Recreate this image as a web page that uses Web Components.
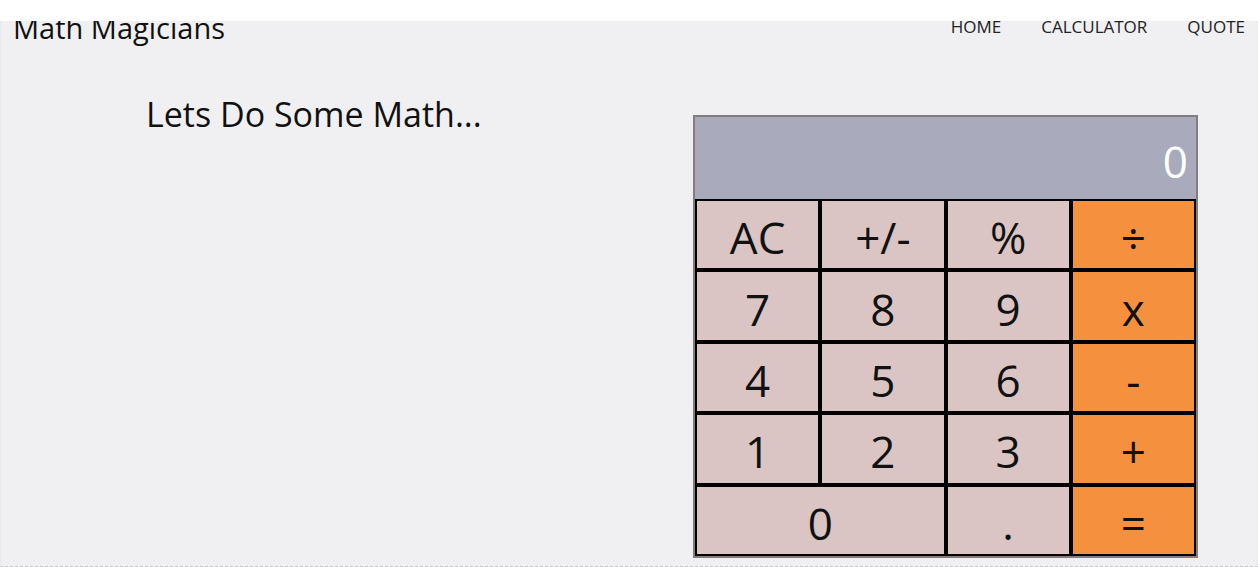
<!DOCTYPE html>
<html lang="en">
<head>
<meta charset="utf-8">
<title>Math Magicians</title>
<style>
html { height: 100%; }
body { margin: 0; min-height: 100%; box-sizing: border-box; display: flex; flex-direction: column; background: #fff; color: #111; font-family: "Open Sans", "Noto Sans", sans-serif; }
</style>
</head>
<body>
<math-app></math-app>
<script>
class MathApp extends HTMLElement {
  constructor() {
    super();
    this.attachShadow({ mode: 'open' }).innerHTML = `
      <style>
        :host { display: flex; flex-direction: column; flex: 1; padding-top: 21px; }
        .page { flex: 1; overflow: hidden; background: #f0f0f2; border: 1px dotted #e4e4e6; border-top: 0; border-bottom: 1px dashed #c4c4c6; }
        main { display: grid; grid-template-columns: minmax(0, 547fr) minmax(0, 505fr); align-items: start; padding: 0 59px 8px 145px; }
        h2 { margin: 0; font-size: 34px; line-height: 48px; font-weight: 400; }
        math-calculator { margin-top: 25px; }
      </style>
      <div class="page">
        <site-header>Math Magicians</site-header>
        <main>
          <h2>Lets Do Some Math...</h2>
          <math-calculator></math-calculator>
        </main>
      </div>`;
  }
}

class SiteHeader extends HTMLElement {
  constructor() {
    super();
    this.attachShadow({ mode: 'open' }).innerHTML = `
      <style>
        :host { display: flex; justify-content: space-between; align-items: start; height: 69px; overflow: hidden; padding: 0 12px; }
        h1 { margin: -11px 0 0; font-size: 29px; line-height: 36px; font-weight: 400; }
        nav { display: flex; gap: 40px; margin-top: -6px; }
        a { color: #222; text-decoration: none; font-size: 17px; line-height: 24px; }
      </style>
      <h1><slot></slot></h1>
      <nav aria-label="Main">
        <a href="#home">HOME</a>
        <a href="#calculator">CALCULATOR</a>
        <a href="#quote">QUOTE</a>
      </nav>`;
  }
}

class CalcKey extends HTMLElement {
  constructor() {
    super();
    this.attachShadow({ mode: 'open' }).innerHTML = `
      <style>
        :host { display: grid; }
        :host([wide]) { grid-column: span 2; }
        button { margin: 0; padding: 5px 0 0; border: 2px solid #000; border-radius: 0; background: #dac5c4; color: #111; font-family: inherit; font-size: 44px; line-height: 60px; }
        :host([operator]) button { background: #f5913e; }
      </style>
      <button type="button"><slot></slot></button>`;
  }
}

class MathCalculator extends HTMLElement {
  constructor() {
    super();
    this.attachShadow({ mode: 'open' }).innerHTML = `
      <style>
        :host { display: block; border: 2px solid #857c7e; }
        output { display: block; padding: 14px 8px 8px; background: #a9aabb; color: #fff; font-size: 44px; line-height: 60px; text-align: right; }
        .keys { display: grid; grid-template-columns: repeat(4, minmax(0, 1fr)); grid-auto-rows: 1fr; min-height: 357px; }
      </style>
      <output>0</output>
      <div class="keys">
        <calc-key>AC</calc-key><calc-key>+/-</calc-key><calc-key>%</calc-key><calc-key operator>÷</calc-key>
        <calc-key>7</calc-key><calc-key>8</calc-key><calc-key>9</calc-key><calc-key operator>x</calc-key>
        <calc-key>4</calc-key><calc-key>5</calc-key><calc-key>6</calc-key><calc-key operator>-</calc-key>
        <calc-key>1</calc-key><calc-key>2</calc-key><calc-key>3</calc-key><calc-key operator>+</calc-key>
        <calc-key wide>0</calc-key><calc-key>.</calc-key><calc-key operator>=</calc-key>
      </div>`;
  }
}

customElements.define('calc-key', CalcKey);
customElements.define('math-calculator', MathCalculator);
customElements.define('site-header', SiteHeader);
customElements.define('math-app', MathApp);
</script>
</body>
</html>
